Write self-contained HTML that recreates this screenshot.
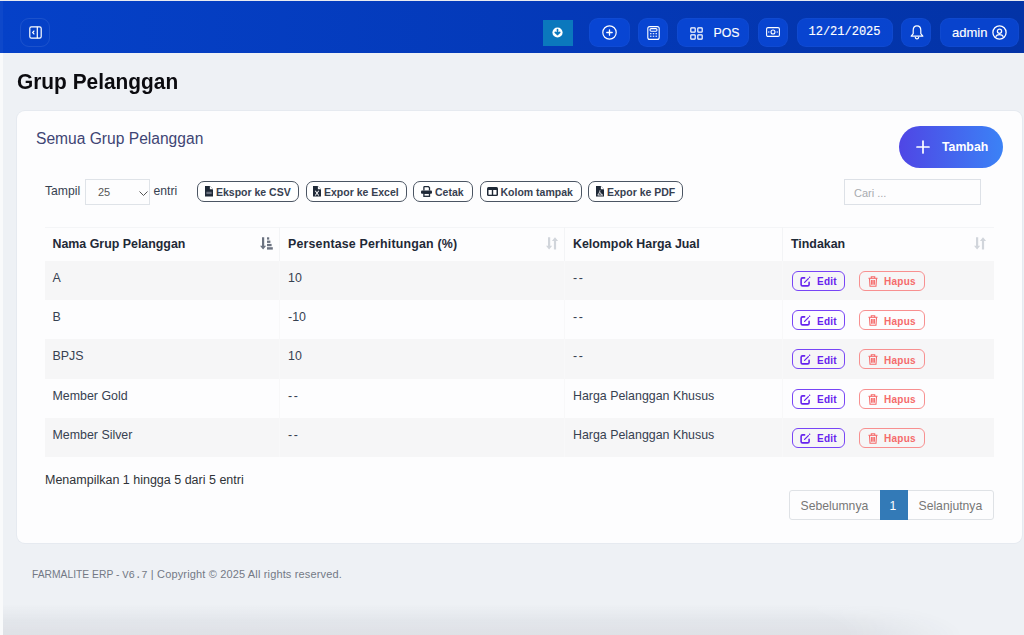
<!DOCTYPE html>
<html><head><meta charset="utf-8">
<style>
*{box-sizing:border-box;margin:0;padding:0}
html,body{width:1024px;height:635px;overflow:hidden}
body{font-family:"Liberation Sans",sans-serif;background:#eef1f5;position:relative;color:#374151}
.abs{position:absolute}
#topline{left:0;top:0;width:1024px;height:1.5px;background:#e8eaf0}
#leftstrip{left:0;top:53px;width:3px;height:582px;background:#f9fafb}
#header{left:0;top:1px;width:1024px;height:52px;background:linear-gradient(to right,#0541c8,#0439b8 55%,#0333a6)}
#header .lstrip{position:absolute;left:0;top:0;width:3px;height:52px;background:rgba(255,255,255,0.04)}
.hb{position:absolute;top:16.5px;height:29px;border-radius:9px;background:rgba(12,78,230,0.6);border:1px solid rgba(255,255,255,0.03);color:#fff;display:flex;align-items:center;justify-content:center;font-size:13px}
#toggle{left:20px;width:30px;background:transparent;border:1px solid rgba(255,255,255,0.09)}
#dl{position:absolute;left:543px;top:19px;width:30px;height:26px;background:#0b78bd}
.hb svg,#dl svg{position:absolute}
.hb span{-webkit-text-stroke:0.15px #fff}
.card{left:16.5px;top:111px;width:1005.5px;height:432px;background:#fdfdfe;border-radius:8px;box-shadow:0 0 0 1px rgba(40,60,100,0.035)}
h1{position:absolute;left:17px;top:68.5px;font-size:22.3px;font-weight:bold;color:#0b0b0f;transform:scaleX(0.936);transform-origin:0 0;white-space:nowrap}
#subtitle{left:36px;top:129.5px;font-size:15.6px;color:#3f4574;white-space:nowrap}
#tambah{left:899px;top:125.5px;width:104px;height:42px;border-radius:21px;background:linear-gradient(to right,#4f46e5,#3b82f6);color:#fff;font-weight:bold;font-size:12.3px}
#tambah span{position:absolute;left:43px;top:14px}
#tambah svg{position:absolute;left:17px;top:14px}
.lbl{font-size:12.2px;color:#374151;white-space:nowrap}
#sel{left:85px;top:179px;width:65px;height:26px;border:1px solid #dfe3e8;background:#fdfdfe}
#sel span{position:absolute;left:12px;top:5.5px;font-size:11px;color:#555}
#sel svg{position:absolute;left:53px;top:11px}
.eb{position:absolute;top:181px;height:20.5px;border:1.5px solid #4b5563;border-radius:7px;background:#fff;font-size:10.5px;font-weight:bold;color:#374151;white-space:nowrap}
.eb span{position:absolute;top:3.5px}
.eb svg{position:absolute;top:4px}
#search{left:844px;top:179px;width:137px;height:26px;border:1px solid #dde1e7;background:#fdfdfe}
#search span{position:absolute;left:9px;top:6.5px;font-size:11px;color:#a8abb0}
table{position:absolute;left:44.5px;top:227px;width:949px;border-collapse:collapse;table-layout:fixed}
th,td{text-align:left;vertical-align:top;white-space:nowrap;position:relative}
th{height:33.5px;font-size:12.4px;font-weight:bold;color:#1f2937;padding:9px 8px 0 8px;background:#fdfdfe;border-right:1px solid #f3f4f6;border-top:1px solid #f4f5f7}
td{height:39.2px;font-size:12.4px;color:#374151;padding:10px 8px 0 8px;border-right:1px solid rgba(0,0,0,0.018)}
.dd{letter-spacing:1.6px}
td:last-child{border-right:none}
tr.g td{background:#f6f6f7}
tr.w td{background:#fdfdfe}
th:last-child{border-right:none}
.sorti{position:absolute;top:8.5px}
.ab{position:absolute;top:10.1px;height:20px;border:1.5px solid;border-radius:6px;font-size:10px;font-weight:bold;letter-spacing:0.25px}
.ab.e{left:9px;width:53px;border-color:#7845f6;color:#6622ee}
.ab.h{left:76px;width:66px;border-color:#f89090;color:#f56b6b}
.ab span{position:absolute;top:4.3px}
.ab svg{position:absolute}
#info{left:45px;top:473px;font-size:12.5px;color:#2f3338}
#pag{left:788.5px;top:490px;width:205px;height:30px;border:1px solid #dfe2e6;border-radius:3px;background:#fdfdfe;font-size:12.2px;color:#777}
#pag .act{position:absolute;left:90px;top:-1px;width:28px;height:30px;background:#337ab7;color:#fff}
#pag span{position:absolute;top:8px}
#foot{left:32px;top:567.5px;font-size:11px;color:#737985;white-space:nowrap;letter-spacing:0.15px}
#foot .p{letter-spacing:0px;font-size:10.3px}
#foot .m{letter-spacing:0}
#foot .m{font-family:"Liberation Mono",monospace;font-size:10.6px}
#shadow{left:0;top:604px;width:1021px;height:31px;background:linear-gradient(to bottom,rgba(30,35,55,0) 0,rgba(30,35,55,0.025) 8px,rgba(30,35,55,0.05) 17px,rgba(30,35,55,0.075) 31px);-webkit-mask-image:radial-gradient(ellipse 960px 90px at 0 100%,#000 0,#000 88%,transparent 100%)}
#shwrap{left:3px;top:0;width:1021px;height:635px;overflow:hidden}
</style></head>
<body>
<div class="abs" id="topline"></div>
<div class="abs" id="header">
  <div class="lstrip"></div>
  <div class="hb" id="toggle">
    <svg style="left:7.5px;top:7.5px" width="13" height="13" viewBox="0 0 13 13" fill="none" stroke="#fff" stroke-width="1.2"><rect x="0.8" y="0.8" width="11.4" height="11.4" rx="1.6"/><line x1="8.3" y1="0.8" x2="8.3" y2="12.2"/><path d="M5 5 L3.6 6.5 L5 8" stroke-width="1.1" stroke-linecap="round"/></svg>
  </div>
  <div id="dl"><svg style="left:9.2px;top:7.3px" width="11" height="11" viewBox="0 0 11 11"><circle cx="5.5" cy="5.5" r="5.1" fill="#fff"/><path d="M5.5 2.6 V7.4 M3.3 5.3 L5.5 7.5 L7.7 5.3" stroke="#0b78bd" stroke-width="1.7" fill="none" stroke-linecap="round" stroke-linejoin="round"/></svg></div>
  <div class="hb" style="left:589px;width:41px"><svg style="left:12px;top:6.5px" width="15" height="15" viewBox="0 0 15 15" fill="none" stroke="#fff" stroke-width="1.2"><circle cx="7.5" cy="7.5" r="6.7"/><path d="M7.5 4.8 V10.2 M4.8 7.5 H10.2" stroke-width="1.3" stroke-linecap="round"/></svg></div>
  <div class="hb" style="left:638px;width:30px"><svg style="left:8px;top:7px" width="13" height="14" viewBox="0 0 13 14" fill="none" stroke="#fff" stroke-width="1.1"><rect x="0.8" y="0.6" width="11.4" height="12.8" rx="2"/><rect x="3" y="2.6" width="7" height="2.6" rx="1.1"/><g fill="#fff" stroke="none" opacity="0.85"><rect x="3" y="7" width="1.5" height="1.3"/><rect x="5.75" y="7" width="1.5" height="1.3"/><rect x="8.5" y="7" width="1.5" height="1.3"/><rect x="3" y="9.6" width="1.5" height="1.3"/><rect x="5.75" y="9.6" width="1.5" height="1.3"/><rect x="8.5" y="9.6" width="1.5" height="1.3"/></g></svg></div>
  <div class="hb" style="left:677px;width:72px"><svg style="left:12px;top:8px" width="13" height="13" viewBox="0 0 13 13" fill="none" stroke="#fff" stroke-width="1.2"><rect x="0.8" y="0.8" width="4.4" height="4.4" rx="0.6"/><rect x="7.8" y="0.8" width="4.4" height="4.4" rx="0.6"/><rect x="0.8" y="7.8" width="4.4" height="4.4" rx="0.6"/><rect x="7.8" y="7.8" width="4.4" height="4.4" rx="0.6"/></svg><span style="position:absolute;left:35.5px;top:7px;font-size:12.3px">POS</span></div>
  <div class="hb" style="left:758px;width:30px"><svg style="left:7px;top:8.5px" width="14" height="10" viewBox="0 0 14 10" fill="none" stroke="#fff" stroke-width="1.1"><rect x="0.6" y="0.6" width="12.8" height="8.8" rx="1.4"/><circle cx="7" cy="5" r="2"/><g fill="#fff" stroke="none"><circle cx="2.8" cy="5" r="0.65"/><circle cx="11.2" cy="5" r="0.65"/></g></svg></div>
  <div class="hb" style="left:797px;width:96px"><span style="position:absolute;left:10.5px;top:6.5px;font-family:'Liberation Mono',monospace;font-size:12px">12/21/2025</span></div>
  <div class="hb" style="left:901px;width:30px"><svg style="left:8px;top:6.5px" width="14" height="15" viewBox="0 0 14 15" fill="none" stroke="#fff" stroke-width="1.2" stroke-linejoin="round"><path d="M7 0.9 C4.6 0.9 3.2 2.9 3.2 5.3 V8.7 L1.2 11.2 H12.8 L10.8 8.7 V5.3 C10.8 2.9 9.4 0.9 7 0.9 Z"/><path d="M5.2 11.8 C5.4 13.2 6.1 13.9 7 13.9 C7.9 13.9 8.6 13.2 8.8 11.8"/></svg></div>
  <div class="hb" style="left:940px;width:79px"><span style="position:absolute;left:11px;top:6px;font-size:13px">admin</span><svg style="left:51px;top:6.5px" width="15" height="15" viewBox="0 0 15 15" fill="none" stroke="#fff" stroke-width="1.3"><circle cx="7.5" cy="7.5" r="6.6"/><circle cx="7.5" cy="6.2" r="2.1"/><path d="M3.6 11.8 C4.3 10.4 5.6 9.7 7.5 9.7 C9.4 9.7 10.7 10.4 11.4 11.8"/></svg></div>
</div>
<div class="abs" id="leftstrip"></div>
<h1>Grup Pelanggan</h1>
<div class="abs card"></div>
<div class="abs" id="subtitle">Semua Grup Pelanggan</div>
<div class="abs" id="tambah"><svg width="14" height="14" viewBox="0 0 14 14" stroke="#fff" stroke-width="1.7" stroke-linecap="round"><path d="M7 1 V13 M1 7 H13"/></svg><span>Tambah</span></div>

<div class="abs lbl" style="left:45px;top:184px">Tampil</div>
<div class="abs" id="sel"><span>25</span><svg width="9" height="5" viewBox="0 0 9 5" fill="none" stroke="#555" stroke-width="1"><path d="M0.5 0.5 L4.5 4.5 L8.5 0.5"/></svg></div>
<div class="abs lbl" style="left:153.5px;top:184px">entri</div>

<div class="eb" style="left:197px;width:102px"><svg style="left:7px" width="8" height="10.5" viewBox="0 0 9 11" preserveAspectRatio="none"><path d="M0 0 H5.5 L9 3.5 V11 H0 Z" fill="#1f2937"/><path d="M5.5 0 V3.5 H9" fill="#fff"/><rect x="1.5" y="6" width="6" height="2.5" fill="#6b7280"/></svg><span style="left:18px">Ekspor ke CSV</span></div>
<div class="eb" style="left:306px;width:101px"><svg style="left:6px" width="8" height="10.5" viewBox="0 0 9 11" preserveAspectRatio="none"><path d="M0 0 H5.5 L9 3.5 V11 H0 Z" fill="#1f2937"/><path d="M5.5 0 V3.5 H9" fill="#fff"/><path d="M2.5 5 L6.5 10 M6.5 5 L2.5 10" stroke="#fff" stroke-width="1.1"/></svg><span style="left:17px">Expor ke Excel</span></div>
<div class="eb" style="left:413px;width:60px"><svg style="left:6.5px;top:3.5px" width="11" height="11" viewBox="0 0 11 11"><path d="M2.9 4.6 V1.2 C2.9 0.9 3.1 0.6 3.5 0.6 H7.4 L8.5 1.7 V4.6" fill="none" stroke="#1f2937" stroke-width="1.3"/><rect x="0" y="4.4" width="11" height="3.4" rx="1" fill="#1f2937"/><rect x="2.9" y="7.3" width="5.6" height="3" fill="#fff" stroke="#1f2937" stroke-width="1.3"/></svg><span style="left:21px">Cetak</span></div>
<div class="eb" style="left:479.5px;width:102px"><svg style="left:6px;top:4.5px" width="11" height="9" viewBox="0 0 11 9"><rect x="0" y="0" width="11" height="9" rx="1.5" fill="#1f2937"/><rect x="1.5" y="3" width="3.3" height="4.7" fill="#fff"/><rect x="6.2" y="3" width="3.3" height="4.7" fill="#fff"/></svg><span style="left:20px">Kolom tampak</span></div>
<div class="eb" style="left:588px;width:95px"><svg style="left:6.5px" width="8" height="10.5" viewBox="0 0 9 11" preserveAspectRatio="none"><path d="M0 0 H5.5 L9 3.5 V11 H0 Z" fill="#1f2937"/><path d="M5.5 0 V3.5 H9" fill="#fff"/><path d="M4.5 4.5 C4 6.5 3.5 8 2 9.5 M4.5 6.5 C5 8 6 9 7.5 9.5 M2 9.5 H7.5" stroke="#fff" stroke-width="0.9" fill="none"/></svg><span style="left:18px">Expor ke PDF</span></div>

<div class="abs" id="search"><span>Cari ...</span></div>

<table>
<colgroup><col style="width:235px"><col style="width:285px"><col style="width:218px"><col style="width:211px"></colgroup>
<thead><tr>
<th>Nama Grup Pelanggan<svg class="sorti" style="left:215.5px" width="13" height="13" viewBox="0 0 13 13" fill="#6b7280"><path d="M2 0.3 H4.2 V8.8 H6.2 L3.1 12.6 L0 8.8 H2 Z"/><rect x="7" y="0.3" width="2.2" height="2.3"/><rect x="7" y="3.6" width="3.4" height="2.3"/><rect x="7" y="6.9" width="4.6" height="2.3"/><rect x="7" y="10.2" width="5.8" height="2.4"/></svg></th>
<th><span style="letter-spacing:0.18px">Persentase Perhitungan (%)</span><svg class="sorti" style="left:265.5px" width="13" height="13" viewBox="0 0 13 13" fill="#d1d5db"><path d="M2 0.3 H4.2 V8.8 H6.2 L3.1 12.6 L0 8.8 H2 Z"/><path d="M7.9 12.6 H10.1 V4.1 H12.1 L9 0.3 L5.9 4.1 H7.9 Z"/></svg></th>
<th>Kelompok Harga Jual</th>
<th>Tindakan<svg class="sorti" style="left:191px" width="13" height="13" viewBox="0 0 13 13" fill="#d1d5db"><path d="M2 0.3 H4.2 V8.8 H6.2 L3.1 12.6 L0 8.8 H2 Z"/><path d="M7.9 12.6 H10.1 V4.1 H12.1 L9 0.3 L5.9 4.1 H7.9 Z"/></svg></th>
</tr></thead>
<tbody>
<tr class="g"><td>A</td><td>10</td><td class="dd">--</td><td><div class="ab e"><svg style="left:6.5px;top:4px" width="11" height="11" viewBox="0 0 11 11" fill="none" stroke="currentColor" stroke-width="1.6" stroke-linecap="round" stroke-linejoin="round"><path d="M4.6 1.9 H2.6 C1.7 1.9 1.1 2.5 1.1 3.4 V8.4 C1.1 9.3 1.7 9.9 2.6 9.9 H7.6 C8.5 9.9 9.1 9.3 9.1 8.4 V6.4"/><path d="M4.6 6.4 L8.4 2.6" stroke-width="1.3"/><circle cx="9.6" cy="1.3" r="0.75" fill="currentColor" stroke="none"/></svg><span style="left:24px">Edit</span></div><div class="ab h"><svg style="left:7.5px;top:4px" width="10" height="11" viewBox="0 0 10 11" fill="none" stroke="currentColor" stroke-width="1.1"><path d="M0.5 2.3 H9.5"/><path d="M3.3 2.2 V0.8 H6.7 V2.2"/><path d="M1.5 2.5 L2 10.2 H8 L8.5 2.5"/><path d="M3.6 4 V8.8 M5 4 V8.8 M6.4 4 V8.8"/></svg><span style="left:24px">Hapus</span></div></td></tr>
<tr class="w"><td>B</td><td>-10</td><td class="dd">--</td><td><div class="ab e"><svg style="left:6.5px;top:4px" width="11" height="11" viewBox="0 0 11 11" fill="none" stroke="currentColor" stroke-width="1.6" stroke-linecap="round" stroke-linejoin="round"><path d="M4.6 1.9 H2.6 C1.7 1.9 1.1 2.5 1.1 3.4 V8.4 C1.1 9.3 1.7 9.9 2.6 9.9 H7.6 C8.5 9.9 9.1 9.3 9.1 8.4 V6.4"/><path d="M4.6 6.4 L8.4 2.6" stroke-width="1.3"/><circle cx="9.6" cy="1.3" r="0.75" fill="currentColor" stroke="none"/></svg><span style="left:24px">Edit</span></div><div class="ab h"><svg style="left:7.5px;top:4px" width="10" height="11" viewBox="0 0 10 11" fill="none" stroke="currentColor" stroke-width="1.1"><path d="M0.5 2.3 H9.5"/><path d="M3.3 2.2 V0.8 H6.7 V2.2"/><path d="M1.5 2.5 L2 10.2 H8 L8.5 2.5"/><path d="M3.6 4 V8.8 M5 4 V8.8 M6.4 4 V8.8"/></svg><span style="left:24px">Hapus</span></div></td></tr>
<tr class="g"><td>BPJS</td><td>10</td><td class="dd">--</td><td><div class="ab e"><svg style="left:6.5px;top:4px" width="11" height="11" viewBox="0 0 11 11" fill="none" stroke="currentColor" stroke-width="1.6" stroke-linecap="round" stroke-linejoin="round"><path d="M4.6 1.9 H2.6 C1.7 1.9 1.1 2.5 1.1 3.4 V8.4 C1.1 9.3 1.7 9.9 2.6 9.9 H7.6 C8.5 9.9 9.1 9.3 9.1 8.4 V6.4"/><path d="M4.6 6.4 L8.4 2.6" stroke-width="1.3"/><circle cx="9.6" cy="1.3" r="0.75" fill="currentColor" stroke="none"/></svg><span style="left:24px">Edit</span></div><div class="ab h"><svg style="left:7.5px;top:4px" width="10" height="11" viewBox="0 0 10 11" fill="none" stroke="currentColor" stroke-width="1.1"><path d="M0.5 2.3 H9.5"/><path d="M3.3 2.2 V0.8 H6.7 V2.2"/><path d="M1.5 2.5 L2 10.2 H8 L8.5 2.5"/><path d="M3.6 4 V8.8 M5 4 V8.8 M6.4 4 V8.8"/></svg><span style="left:24px">Hapus</span></div></td></tr>
<tr class="w"><td>Member Gold</td><td class="dd">--</td><td>Harga Pelanggan Khusus</td><td><div class="ab e"><svg style="left:6.5px;top:4px" width="11" height="11" viewBox="0 0 11 11" fill="none" stroke="currentColor" stroke-width="1.6" stroke-linecap="round" stroke-linejoin="round"><path d="M4.6 1.9 H2.6 C1.7 1.9 1.1 2.5 1.1 3.4 V8.4 C1.1 9.3 1.7 9.9 2.6 9.9 H7.6 C8.5 9.9 9.1 9.3 9.1 8.4 V6.4"/><path d="M4.6 6.4 L8.4 2.6" stroke-width="1.3"/><circle cx="9.6" cy="1.3" r="0.75" fill="currentColor" stroke="none"/></svg><span style="left:24px">Edit</span></div><div class="ab h"><svg style="left:7.5px;top:4px" width="10" height="11" viewBox="0 0 10 11" fill="none" stroke="currentColor" stroke-width="1.1"><path d="M0.5 2.3 H9.5"/><path d="M3.3 2.2 V0.8 H6.7 V2.2"/><path d="M1.5 2.5 L2 10.2 H8 L8.5 2.5"/><path d="M3.6 4 V8.8 M5 4 V8.8 M6.4 4 V8.8"/></svg><span style="left:24px">Hapus</span></div></td></tr>
<tr class="g"><td>Member Silver</td><td class="dd">--</td><td>Harga Pelanggan Khusus</td><td><div class="ab e"><svg style="left:6.5px;top:4px" width="11" height="11" viewBox="0 0 11 11" fill="none" stroke="currentColor" stroke-width="1.6" stroke-linecap="round" stroke-linejoin="round"><path d="M4.6 1.9 H2.6 C1.7 1.9 1.1 2.5 1.1 3.4 V8.4 C1.1 9.3 1.7 9.9 2.6 9.9 H7.6 C8.5 9.9 9.1 9.3 9.1 8.4 V6.4"/><path d="M4.6 6.4 L8.4 2.6" stroke-width="1.3"/><circle cx="9.6" cy="1.3" r="0.75" fill="currentColor" stroke="none"/></svg><span style="left:24px">Edit</span></div><div class="ab h"><svg style="left:7.5px;top:4px" width="10" height="11" viewBox="0 0 10 11" fill="none" stroke="currentColor" stroke-width="1.1"><path d="M0.5 2.3 H9.5"/><path d="M3.3 2.2 V0.8 H6.7 V2.2"/><path d="M1.5 2.5 L2 10.2 H8 L8.5 2.5"/><path d="M3.6 4 V8.8 M5 4 V8.8 M6.4 4 V8.8"/></svg><span style="left:24px">Hapus</span></div></td></tr>
</tbody>
</table>

<div class="abs" id="info">Menampilkan 1 hingga 5 dari 5 entri</div>
<div class="abs" id="pag"><span style="left:11px">Sebelumnya</span><div class="act"><span style="left:10px;top:9px">1</span></div><span style="left:129px">Selanjutnya</span></div>
<div class="abs" id="foot"><span class="p">FARMALITE ERP - </span><span class="m">V6.7</span> | Copyright © 2025 All rights reserved.</div>
<div class="abs" id="shwrap"><div class="abs" id="shadow"></div></div>
</body></html>
